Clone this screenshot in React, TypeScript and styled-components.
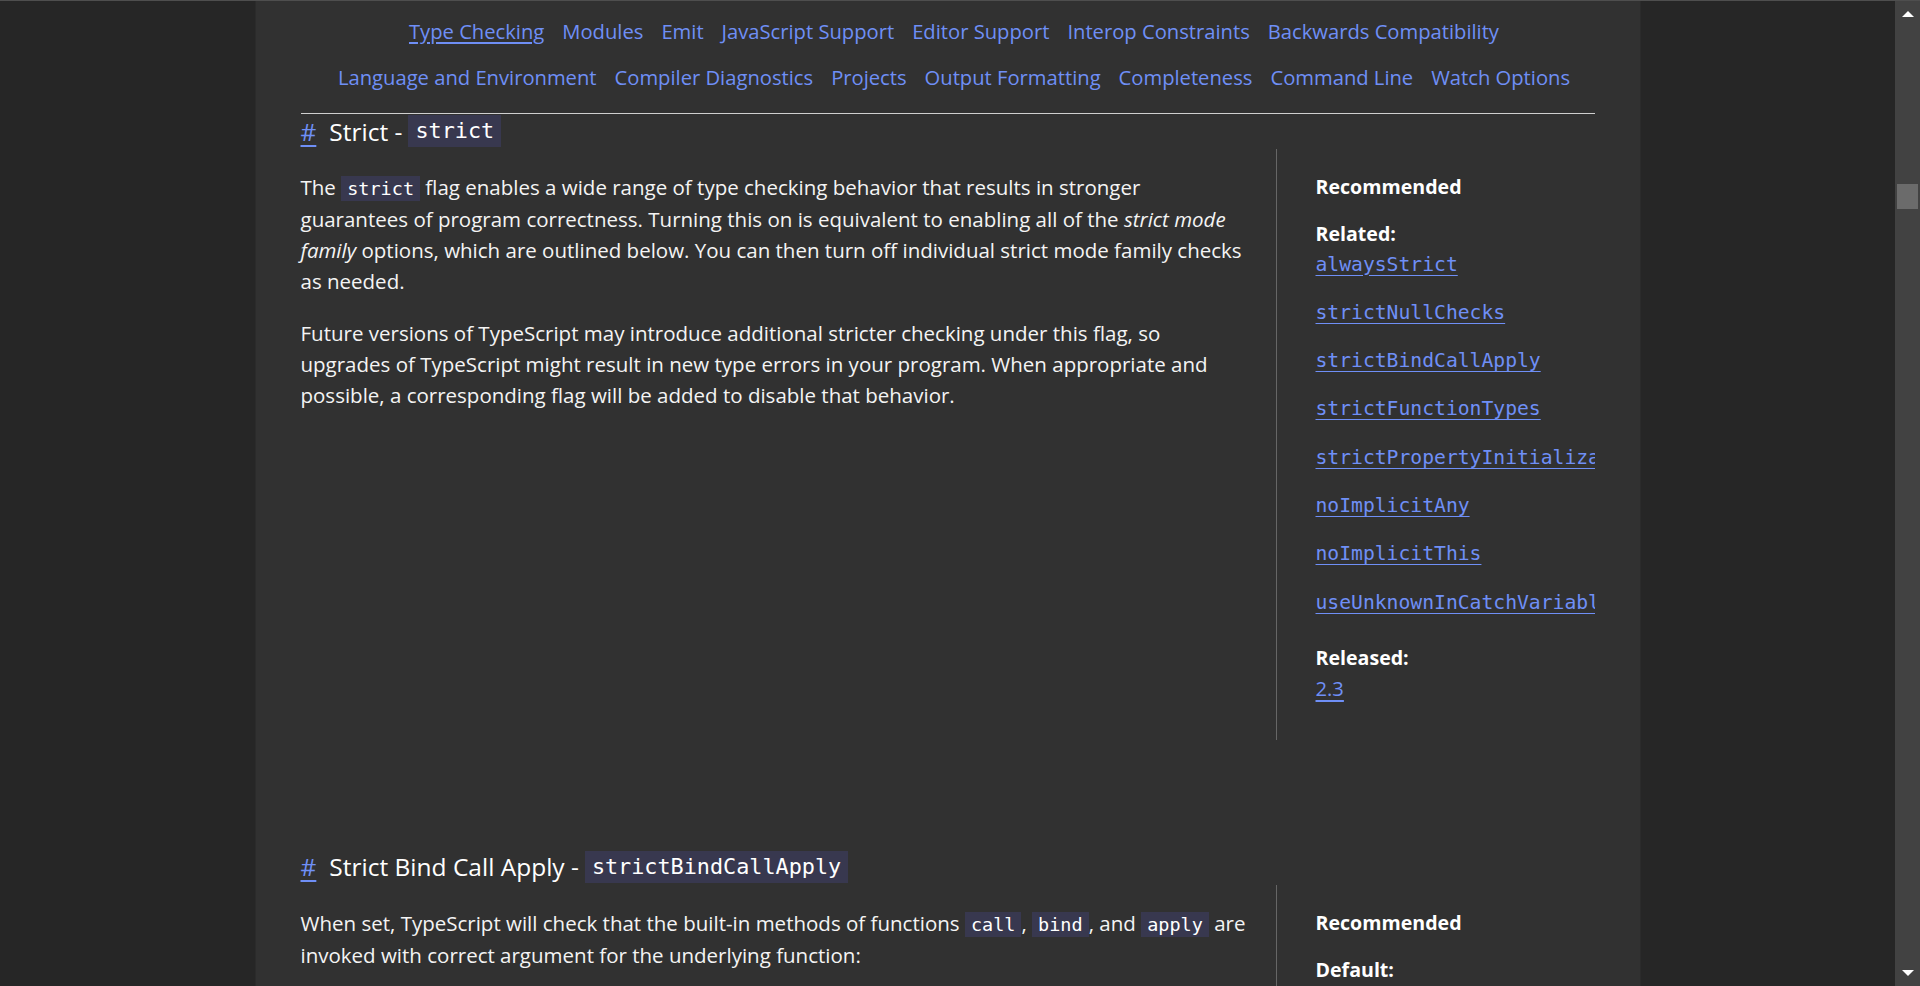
import React from 'react';
import styled, { createGlobalStyle } from 'styled-components';

const sans = `"Open Sans", "Noto Sans", sans-serif`;
const mono = `"DejaVu Sans Mono", "Liberation Mono", monospace`;

const colors = {
  page: '#262626',
  panel: '#313131',
  text: '#f4f4f4',
  link: '#6f8ff6',
  code: '#38384f',
  rule: '#cfcfcf',
  divider: '#666666',
  track: '#424242',
  thumb: '#6b6b6b',
};

const GlobalStyle = createGlobalStyle`
  html, body {
    margin: 0;
    padding: 0;
    height: 100%;
    overflow: hidden;
    background: ${colors.page};
  }
  #root {
    height: 100%;
  }
`;

const Shell = styled.div`
  display: flex;
  height: 986px;
  box-sizing: border-box;
  border-top: 1px solid #4e4e4e;
  font-family: ${sans};
  color: ${colors.text};
`;

const Stage = styled.div`
  flex: 1;
  display: flex;
  justify-content: center;
  background: ${colors.page};
  overflow: hidden;
`;

const Panel = styled.main`
  width: 1384px;
  flex-shrink: 0;
  box-sizing: border-box;
  padding: 0 45px;
  background: ${colors.panel};
  box-shadow: 0 0 0 1px #2b2b2b;
  overflow: hidden;
`;

const Nav = styled.nav`
  padding-top: 7px;
`;

const NavRow = styled.div`
  display: flex;
  justify-content: center;
  align-items: center;
  gap: 5px;
  height: 46px;
`;

const NavLink = styled.a<{ $active?: boolean }>`
  margin-left: 13px;
  font-size: 20.2px;
  color: ${colors.link};
  text-decoration: ${(p) => (p.$active ? 'underline' : 'none')};
  text-underline-offset: 3px;
  white-space: nowrap;
`;

const Rule = styled.hr`
  margin: 13px 0 0;
  border: 0;
  border-top: 1px solid ${colors.rule};
`;

const Section = styled.section<{ $gap?: number }>`
  margin-top: ${(p) => p.$gap ?? 0}px;
`;

const Heading = styled.h3`
  display: flex;
  align-items: center;
  gap: 6px;
  height: 34px;
  margin: 0;
  font-size: 24.5px;
  font-weight: 400;
  color: #ffffff;
`;

const Anchor = styled.a`
  color: ${colors.link};
  text-decoration: underline;
  text-underline-offset: 4px;
  margin-right: 7px;
`;

const HeadCode = styled.code`
  padding: 3px 7px;
  line-height: 26px;
  font-family: ${mono};
  font-size: 21.8px;
  background: ${colors.code};
  color: #ffffff;
`;

const Body = styled.div`
  display: grid;
  grid-template-columns: 950px 1fr;
  column-gap: 25px;
  margin-top: 1px;
`;

const Main = styled.div`
  padding-top: 23px;
`;

const Para = styled.p`
  margin: 0 0 21px;
  font-size: 20.5px;
  line-height: 31px;
`;

const Code = styled.code`
  padding: 2px 6px;
  font-family: ${mono};
  font-size: 18.5px;
  background: ${colors.code};
  color: #ffffff;
`;

const Side = styled.aside`
  border-left: 1px solid ${colors.divider};
  padding: 22px 0 36px 39px;
  overflow: hidden;
  font-size: 19.6px;
  line-height: 31px;
`;

const SideLabel = styled.div`
  font-weight: 700;
  color: #ffffff;
`;

const SideGroup = styled.div<{ $gap: number }>`
  margin-top: ${(p) => p.$gap}px;
`;

const LinkList = styled.div`
  display: flex;
  flex-direction: column;
  gap: 17.3px;
`;

const SideLink = styled.a<{ $mono?: boolean }>`
  display: block;
  white-space: nowrap;
  font-family: ${(p) => (p.$mono ? mono : sans)};
  font-size: ${(p) => (p.$mono ? '19.7px' : '20.2px')};
  color: ${colors.link};
  text-decoration: underline;
  text-underline-offset: 4px;
`;

const Scrollbar = styled.div`
  width: 25px;
  flex-shrink: 0;
  display: flex;
  flex-direction: column;
  align-items: center;
  background: ${colors.track};
`;

const Arrow = styled.div<{ $down?: boolean }>`
  width: 0;
  height: 0;
  margin: ${(p) => (p.$down ? 'auto 0 10px' : '10px 0 0')};
  border-left: 6px solid transparent;
  border-right: 6px solid transparent;
  ${(p) =>
    p.$down ? 'border-top: 6px solid #ffffff;' : 'border-bottom: 6px solid #ffffff;'}
`;

const Thumb = styled.div`
  width: 21px;
  height: 25px;
  margin-top: 167px;
  background: ${colors.thumb};
`;

const navTop = [
  'Type Checking',
  'Modules',
  'Emit',
  'JavaScript Support',
  'Editor Support',
  'Interop Constraints',
  'Backwards Compatibility',
];

const navBottom = [
  'Language and Environment',
  'Compiler Diagnostics',
  'Projects',
  'Output Formatting',
  'Completeness',
  'Command Line',
  'Watch Options',
];

const related = [
  'alwaysStrict',
  'strictNullChecks',
  'strictBindCallApply',
  'strictFunctionTypes',
  'strictPropertyInitialization',
  'noImplicitAny',
  'noImplicitThis',
  'useUnknownInCatchVariables',
];

export default function App() {
  return (
    <>
      <GlobalStyle />
      <Shell>
        <Stage>
          <Panel>
            <Nav>
              <NavRow>
                {navTop.map((item, i) => (
                  <NavLink key={item} href="#" $active={i === 0}>
                    {item}
                  </NavLink>
                ))}
              </NavRow>
              <NavRow>
                {navBottom.map((item) => (
                  <NavLink key={item} href="#">
                    {item}
                  </NavLink>
                ))}
              </NavRow>
            </Nav>
            <Rule />

            <Section>
              <Heading>
                <Anchor href="#">#</Anchor>
                <span>Strict -</span>
                <HeadCode>strict</HeadCode>
              </Heading>
              <Body>
                <Main>
                  <Para>
                    The <Code>strict</Code> flag enables a wide range of type checking behavior that
                    results in stronger guarantees{'\u00a0'}of program correctness. Turning this on is
                    equivalent to enabling all of the <em>strict mode family</em> options, which are
                    outlined below. You can then turn off individual strict mode family checks as
                    needed.
                  </Para>
                  <Para>
                    Future versions of TypeScript may introduce additional stricter checking under
                    this flag, so upgrades of TypeScript might result in new type errors in your
                    program. When appropriate and possible, a corresponding flag will be added to
                    disable that behavior.
                  </Para>
                </Main>
                <Side>
                  <SideLabel>Recommended</SideLabel>
                  <SideGroup $gap={15.5}>
                    <SideLabel>Related:</SideLabel>
                    <LinkList>
                      {related.map((r) => (
                        <SideLink key={r} href="#" $mono>
                          {r}
                        </SideLink>
                      ))}
                    </LinkList>
                  </SideGroup>
                  <SideGroup $gap={24}>
                    <SideLabel>Released:</SideLabel>
                    <SideLink href="#">2.3</SideLink>
                  </SideGroup>
                </Side>
              </Body>
            </Section>

            <Section $gap={110}>
              <Heading>
                <Anchor href="#">#</Anchor>
                <span>Strict Bind Call Apply -</span>
                <HeadCode>strictBindCallApply</HeadCode>
              </Heading>
              <Body>
                <Main>
                  <Para>
                    When set, TypeScript will check that the built-in methods of functions{' '}
                    <Code>call</Code>, <Code>bind</Code>, and <Code>apply</Code> are invoked with
                    correct argument for the underlying function:
                  </Para>
                </Main>
                <Side>
                  <SideLabel>Recommended</SideLabel>
                  <SideGroup $gap={16}>
                    <SideLabel>Default:</SideLabel>
                    <SideLink href="#">true</SideLink>
                  </SideGroup>
                </Side>
              </Body>
            </Section>
          </Panel>
        </Stage>
        <Scrollbar>
          <Arrow />
          <Thumb />
          <Arrow $down />
        </Scrollbar>
      </Shell>
    </>
  );
}
